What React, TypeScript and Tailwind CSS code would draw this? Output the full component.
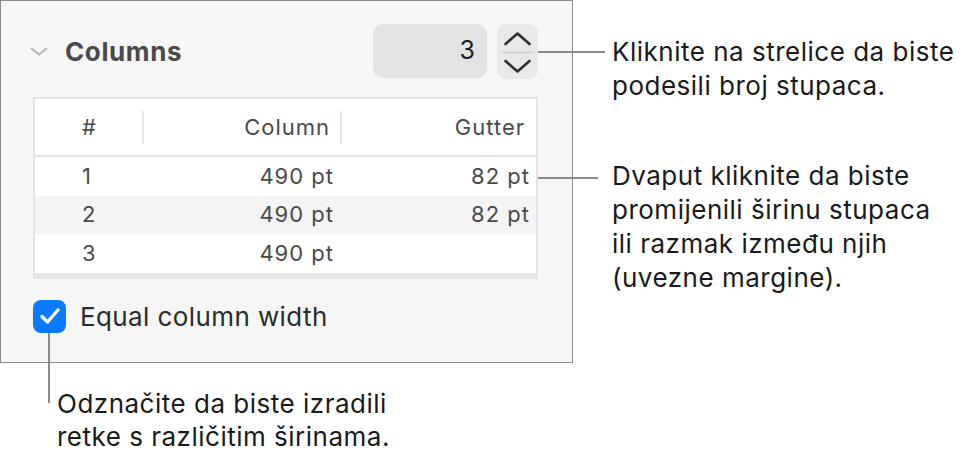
import React from 'react';

const rows = [
    { n: '1', col: '490 pt', gut: '82 pt' },
    { n: '2', col: '490 pt', gut: '82 pt' },
    { n: '3', col: '490 pt', gut: '' },
];

function Panel() {
    return (
        <div className="w-[573px] h-[363px] border border-[#8c8c8c] bg-[#f6f6f6] pl-[32px] pr-[34px] pt-[22px]">
            {/* header row */}
            <div className="flex items-center h-[56px]">
                <svg width="18" height="9" viewBox="0 0 18 9" className="ml-[-3px] mt-[1px]">
                    <polyline points="1.5,1.5 9,7.5 16.5,1.5" fill="none" stroke="#b6b6b6" strokeWidth="2" strokeLinecap="round" strokeLinejoin="round" />
                </svg>
                <span className="ml-[17px] text-[26px] font-bold text-[#4a4a4a] tracking-[0.6px]">Columns</span>
                <div className="ml-auto w-[114px] h-[54px] rounded-[10px] bg-[#e3e3e3] flex items-center justify-end pr-[12px] text-[25px] text-[#1e1e1e]">
                    3
                </div>
                <div className="ml-[10px] w-[41px] h-[55px] rounded-[9px] bg-[#e8e8e8] flex flex-col items-center">
                    <svg width="41" height="55" viewBox="0 0 41 55">
                        <polyline points="8.5,20 20.5,9.5 32.5,20" fill="none" stroke="#2e2e2e" strokeWidth="2.6" strokeLinecap="round" strokeLinejoin="round" />
                        <line x1="5" y1="28.5" x2="36" y2="28.5" stroke="#cdcdcd" strokeWidth="1.5" />
                        <polyline points="8.5,37 20.5,47.5 32.5,37" fill="none" stroke="#2e2e2e" strokeWidth="2.6" strokeLinecap="round" strokeLinejoin="round" />
                    </svg>
                </div>
            </div>

            {/* table */}
            <div className="mt-[18px] w-[505px] border-2 border-b-[6px] border-[#e4e4e4] bg-white text-[22px] tracking-[1px] text-[#4a4a4a]">
                <div className="grid grid-cols-[107px_198px_1fr] h-[58px] items-center border-b-2 border-[#e6e6e6]">
                    <div className="text-center pl-[2px]">#</div>
                    <div className="h-[33px] border-l-2 border-[#e6e6e6] flex items-center justify-end pr-[10px]">Column</div>
                    <div className="h-[33px] border-l-2 border-[#e6e6e6] flex items-center justify-end pr-[11px]">Gutter</div>
                </div>
                {rows.map((r, i) => (
                    <div
                        key={r.n}
                        className={`grid grid-cols-[107px_198px_1fr] h-[38.5px] items-center ${i === 1 ? 'bg-[#f3f4f3]' : 'bg-white'}`}
                    >
                        <div className="pl-[47px]">{r.n}</div>
                        <div className="text-right pr-[6px]">{r.col}</div>
                        <div className="text-right pr-[6px]">{r.gut}</div>
                    </div>
                ))}
            </div>

            {/* checkbox */}
            <div className="mt-[18px] flex items-center">
                <div className="w-[33px] h-[33px] rounded-[8px] bg-[#0a7aff] flex items-center justify-center">
                    <svg width="22" height="18" viewBox="0 0 22 18">
                        <polyline points="3,9.5 8.5,15 19,3" fill="none" stroke="#ffffff" strokeWidth="3.4" strokeLinecap="round" strokeLinejoin="round" />
                    </svg>
                </div>
                <span className="ml-[14px] text-[26px] tracking-[0.4px] text-[#2b2b2b]">Equal column width</span>
            </div>
        </div>
    );
}

export default function App() {
    return (
        <div className="relative w-[963px] h-[455px] bg-white overflow-hidden font-['Inter',sans-serif] text-[#1a1a1a]">
            <div className="flex">
                <div className="w-[573px] shrink-0">
                    <Panel />
                    <div className="pl-[57px] pt-[24px] text-[26px] leading-[33px] tracking-[0.5px]">
                        <p>Odznačite da biste izradili</p>
                        <p>retke s različitim širinama.</p>
                    </div>
                </div>
                <div className="pl-[39px] pt-[35px] text-[26px] leading-[34px] tracking-[0.5px]">
                    <p>Kliknite na strelice da biste</p>
                    <p>podesili broj stupaca.</p>
                    <div className="mt-[56px]">
                        <p>Dvaput kliknite da biste</p>
                        <p>promijenili širinu stupaca</p>
                        <p>ili razmak između njih</p>
                        <p>(uvezne margine).</p>
                    </div>
                </div>
            </div>

            {/* callout leaders */}
            <div className="absolute left-[538px] top-[51px] w-[67px] h-[2px] bg-[#8a8a8a]" />
            <div className="absolute left-[538px] top-[177px] w-[60px] h-[2px] bg-[#8a8a8a]" />
            <div className="absolute left-[48px] top-[333px] w-[2px] h-[70px] bg-[#8a8a8a]" />
        </div>
    );
}
